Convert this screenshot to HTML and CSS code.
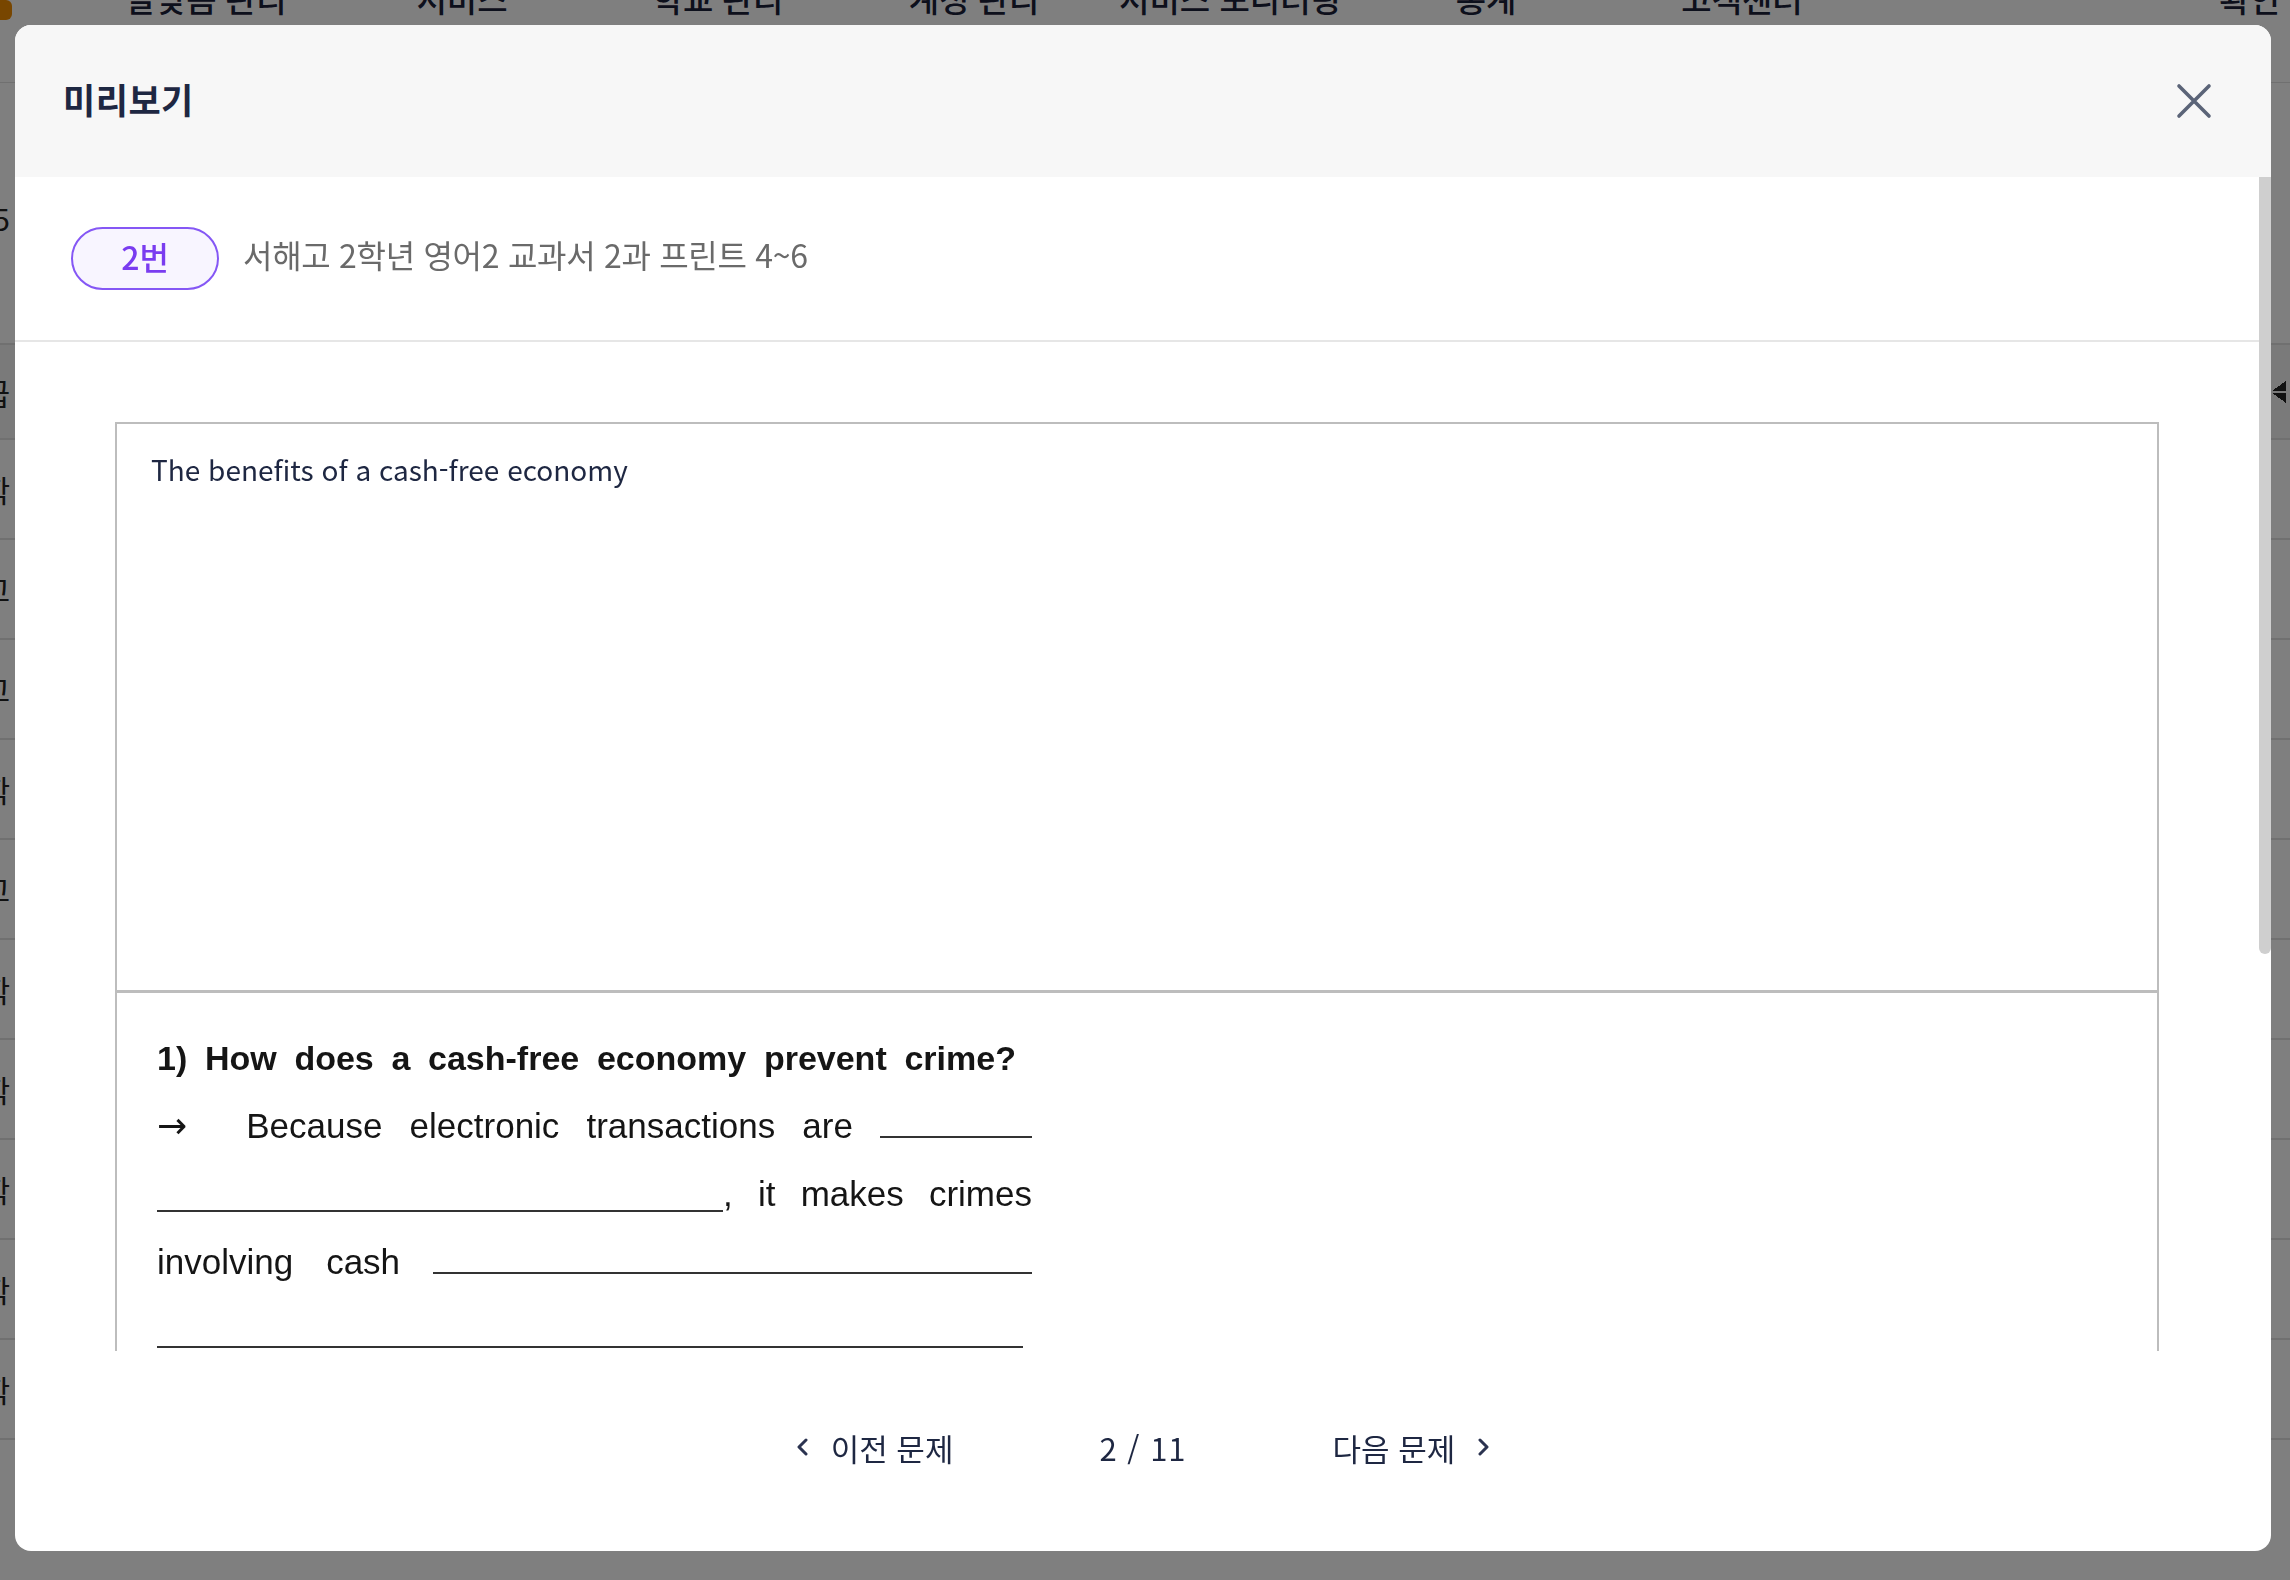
FILE: index.html
```html
<!DOCTYPE html>
<html lang="ko">
<head>
<meta charset="utf-8">
<title>미리보기</title>
<link rel="stylesheet" href="styles.css">
</head>
<body>
<div class="page">
  <nav class="gnb">
    <span class="logo"></span>
    <ul class="menu">
      <li>알맞음 관리</li>
      <li>서비스</li>
      <li>학교 관리</li>
      <li>계정 관리</li>
      <li>서비스 모니터링</li>
      <li>통계</li>
      <li>고객센터</li>
    </ul>
    <span class="user">확인</span>
  </nav>
  <div class="summary"><span class="edge-text">총 5</span></div>
  <div class="table">
    <div class="tr th"><span class="edge-text">등급</span><span class="sort"></span></div>
    <div class="tr"><span class="edge-text">중학</span></div>
    <div class="tr"><span class="edge-text">최고</span></div>
    <div class="tr"><span class="edge-text">최고</span></div>
    <div class="tr"><span class="edge-text">중학</span></div>
    <div class="tr"><span class="edge-text">최고</span></div>
    <div class="tr"><span class="edge-text">중학</span></div>
    <div class="tr"><span class="edge-text">중학</span></div>
    <div class="tr"><span class="edge-text">중학</span></div>
    <div class="tr"><span class="edge-text">중학</span></div>
    <div class="tr"><span class="edge-text">중학</span></div>
  </div>
</div>

<div class="dim">
  <section class="modal">
    <header class="modal-head">
      <h2 class="modal-title">미리보기</h2>
      <button class="close" type="button" aria-label="닫기">
        <svg width="36" height="36" viewBox="0 0 36 36"><path d="M3 3 L33 33 M33 3 L3 33" stroke="#5b6478" stroke-width="3.6" stroke-linecap="round" fill="none"/></svg>
      </button>
    </header>
    <div class="modal-body">
      <div class="scroll-content">
        <div class="q-info">
          <span class="q-num">2번</span>
          <span class="q-title">서해고 2학년 영어2 교과서 2과 프린트 4~6</span>
        </div>
        <div class="preview">
          <div class="paper">
            <div class="passage">The benefits of a cash-free economy</div>
            <div class="question">
              <div class="ln ln-q">
                <span>1)</span><span>How</span><span>does</span><span>a</span><span>cash-free</span><span>economy</span><span>prevent</span><span>crime?</span>
              </div>
              <div class="ln">
                <span class="arrow">→</span><span>Because</span><span>electronic</span><span>transactions</span><span>are</span><span class="blank w152"></span>
              </div>
              <div class="ln">
                <span><span class="blank w566"></span>,</span><span>it</span><span>makes</span><span>crimes</span>
              </div>
              <div class="ln">
                <span>involving</span><span>cash</span><span class="blank w599"></span>
              </div>
              <div class="ln ln-last">
                <span><span class="blank w866"></span>.</span>
              </div>
            </div>
          </div>
        </div>
      </div>
      <div class="scroll-rail"><div class="scroll-thumb"></div></div>
    </div>
    <footer class="pager">
      <button class="pg-btn" type="button">
        <svg width="14" height="20" viewBox="0 0 14 20"><path d="M11 3 L4 10 L11 17" stroke="#2b3350" stroke-width="3" fill="none" stroke-linecap="round" stroke-linejoin="round"/></svg>
        <span>이전 문제</span>
      </button>
      <span class="pg-count">2 / 11</span>
      <button class="pg-btn" type="button">
        <span>다음 문제</span>
        <svg width="14" height="20" viewBox="0 0 14 20"><path d="M3 3 L10 10 L3 17" stroke="#2b3350" stroke-width="3" fill="none" stroke-linecap="round" stroke-linejoin="round"/></svg>
      </button>
    </footer>
  </section>
</div>
</body>
</html>
```

FILE: styles.css
```css
* { box-sizing: border-box; }

html, body {
  margin: 0;
  padding: 0;
  background: #ffffff;
  font-family: "Noto Sans CJK KR", "Noto Sans", sans-serif;
  overflow: hidden;
}

/* ---------- background page ---------- */
.page {
  width: 2290px;
  height: 1580px;
  overflow: hidden;
  color: #222;
}

.gnb {
  display: flex;
  align-items: flex-start;
  height: 83px;
  border-bottom: 1px solid #e0e0e0;
}

.logo {
  width: 22px;
  height: 20px;
  margin-left: -10px;
  border-radius: 6px;
  background: #f08c00;
  flex: none;
}

.menu {
  display: flex;
  margin: -18px 0 0 66px;
  padding: 0;
  list-style: none;
}

.menu li {
  width: 256px;
  text-align: center;
  font-size: 33px;
  font-weight: 500;
  line-height: 32px;
  color: #1a2038;
}

.user {
  margin: -18px 0 0 auto;
  padding-right: 10px;
  font-size: 33px;
  font-weight: 500;
  line-height: 32px;
  color: #1a2038;
}

.summary {
  height: 260px;
  display: flex;
  align-items: center;
  padding-top: 10px;
}

.edge-text {
  width: 10px;
  display: flex;
  justify-content: flex-end;
  white-space: nowrap;
  font-size: 30px;
  color: #222;
}

.table {
  display: flex;
  flex-direction: column;
}

.tr {
  height: 100px;
  display: flex;
  align-items: center;
  justify-content: space-between;
  border-bottom: 2px solid #e0e0e0;
}

.th {
  height: 97px;
  background: #f4f4f4;
  border-top: 2px solid #e0e0e0;
}

.sort {
  width: 14px;
  height: 22px;
  margin-right: 4px;
  background:
    linear-gradient(to bottom right, transparent 50%, #222 50%) top / 14px 10px no-repeat,
    linear-gradient(to top right, transparent 50%, #222 50%) bottom / 14px 10px no-repeat;
}

/* ---------- dim + modal ---------- */
.dim {
  position: fixed;
  inset: 0;
  background: rgba(0, 0, 0, 0.5);
  padding: 25px 0 0 15px;
}

.modal {
  width: 2256px;
  height: 1526px;
  background: #ffffff;
  border-radius: 16px;
  overflow: hidden;
  display: flex;
  flex-direction: column;
}

.modal-head {
  height: 152px;
  flex: none;
  background: #f7f7f7;
  display: flex;
  align-items: center;
  justify-content: space-between;
  padding: 0 59px 0 48px;
}

.modal-title {
  margin: 0;
  font-size: 35px;
  font-weight: 700;
  color: #1e2742;
  letter-spacing: 0.5px;
  margin-top: -5px;
}

.close {
  border: 0;
  background: transparent;
  padding: 0;
  width: 36px;
  height: 36px;
  display: flex;
}

.modal-body {
  flex: 1;
  min-height: 0;
  display: flex;
}

.scroll-content {
  flex: 1;
  min-width: 0;
  overflow: hidden;
}

.scroll-rail {
  width: 12px;
  flex: none;
  background: #ffffff;
}

.scroll-thumb {
  height: 777px;
  background: #cfcfcf;
  border-radius: 0 0 6px 6px;
}

.q-info {
  height: 165px;
  display: flex;
  align-items: center;
  gap: 24px;
  padding: 0 56px;
  border-bottom: 2px solid #e6e6e6;
}

.q-num {
  width: 148px;
  height: 63px;
  display: flex;
  align-items: center;
  justify-content: center;
  padding-bottom: 5px;
  border: 2px solid #8557f5;
  border-radius: 32px;
  background: #f8f5ff;
  color: #7a3cf0;
  font-size: 32px;
  font-weight: 500;
}

.q-title {
  font-size: 32px;
  color: #6a6a6a;
  letter-spacing: -0.3px;
  margin-top: -9px;
}

.preview {
  padding: 80px 100px 100px 100px;
}

.paper {
  border: 2px solid #bdbdbd;
}

.passage {
  height: 569px;
  padding: 25px 34px 0;
  border-bottom: 3px solid #bdbdbd;
  font-size: 28px;
  line-height: 40px;
  color: #1e2742;
}

.question {
  min-height: 853px;
  padding: 31px 0 0 40px;
  font-family: "Liberation Sans", Arial, sans-serif;
  color: #151515;
}

.ln {
  width: 875px;
  height: 68px;
  display: flex;
  align-items: baseline;
  justify-content: space-between;
  font-size: 35px;
  line-height: 68px;
}

.ln-q {
  padding-right: 16px;
  font-size: 34px;
  font-weight: 700;
}

.ln-last {
  justify-content: flex-start;
}

.arrow {
  font-family: "DejaVu Sans", "Liberation Sans", sans-serif;
  font-size: 36px;
  margin-right: 32px;
}

.blank {
  display: inline-block;
  height: 0;
  border-bottom: 2px solid #333;
  margin-bottom: -6px;
}

.w152 { width: 152px; }
.w566 { width: 566px; }
.w599 { width: 599px; }
.w866 { width: 866px; }

.pager {
  height: 200px;
  flex: none;
  display: flex;
  align-items: center;
  justify-content: center;
  gap: 146px;
  padding-bottom: 8px;
  color: #1e2742;
}

.pg-btn {
  border: 0;
  background: transparent;
  padding: 0;
  display: flex;
  align-items: center;
  gap: 22px;
  font-family: inherit;
  font-size: 31px;
  color: #1e2742;
}

.pg-count {
  font-size: 31px;
  letter-spacing: 1px;
}
```
